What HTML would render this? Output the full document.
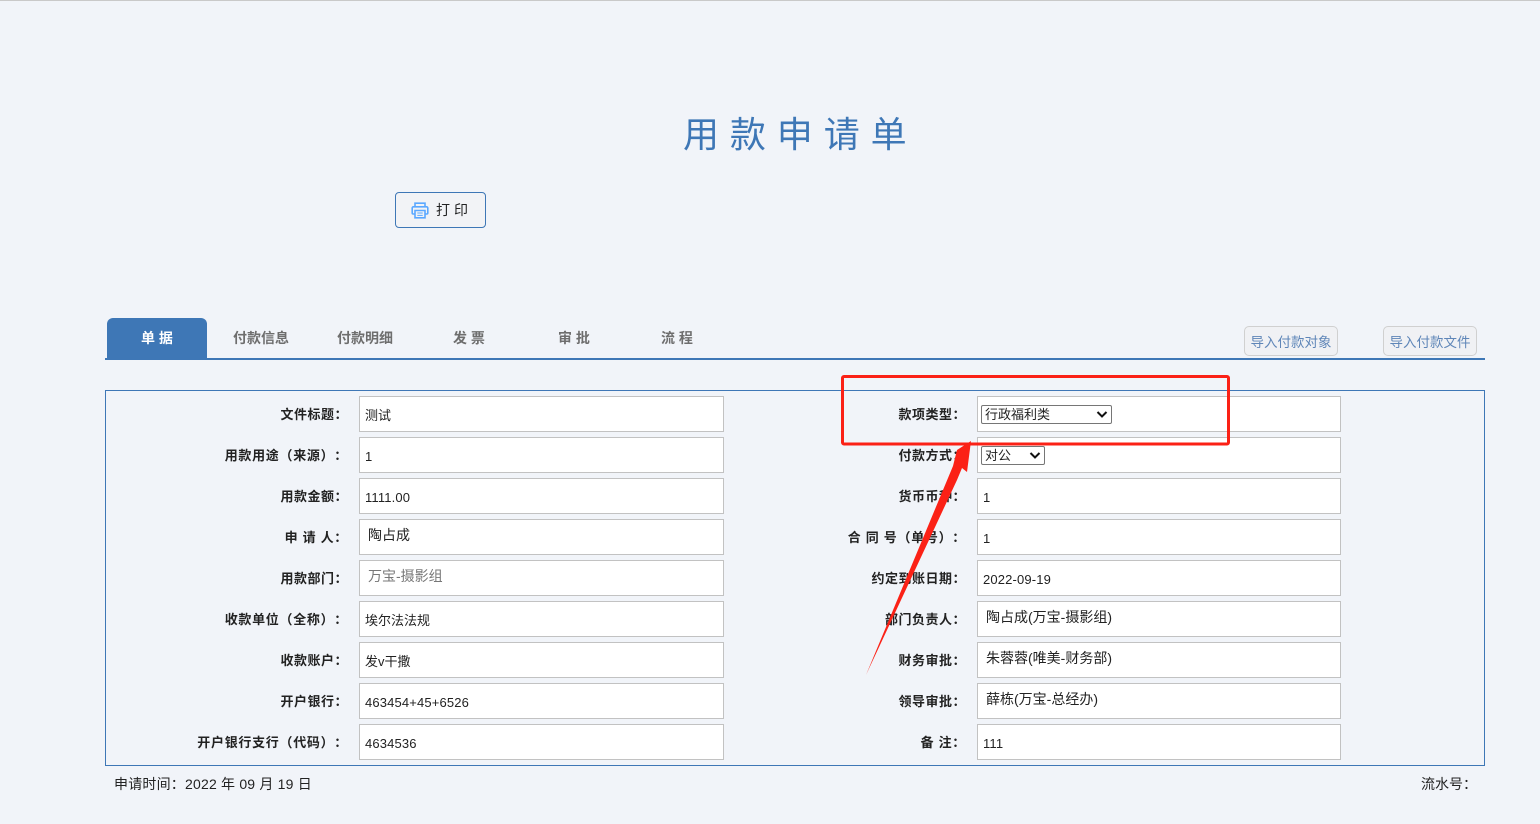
<!DOCTYPE html>
<html lang="zh">
<head>
<meta charset="utf-8">
<style>
html,body{margin:0;padding:0;}
body{width:1540px;height:824px;background:#f1f4f9;position:relative;overflow:hidden;font-family:"Liberation Sans","Noto Sans CJK SC",sans-serif;font-size:13px;color:#222;text-spacing-trim:space-all;}
.a{position:absolute;white-space:nowrap;}
.box{position:absolute;box-sizing:border-box;height:36px;background:#fff;border:1px solid #c2c2c2;line-height:37px;padding-left:5px;font-size:13px;color:#222;white-space:nowrap;}
.n{letter-spacing:.15px;}
.l{left:359px;width:365px;}
.r{left:977px;width:364px;}
.lab{position:absolute;height:36px;line-height:37px;font-weight:bold;text-align:right;font-size:13px;color:#222;white-space:nowrap;width:238px;letter-spacing:.5px;}
.ll{left:110px;}
.rl{left:728px;}
.p{letter-spacing:.7px;}
.tab{position:absolute;top:318px;height:40px;line-height:41px;text-align:center;font-weight:bold;font-size:14px;color:#6e6e6e;white-space:nowrap;}
.btn{position:absolute;box-sizing:border-box;top:326px;height:30px;background:#f0f1f4;border:1px solid #d0d0d0;border-radius:5px;color:#5f86b8;font-size:13.5px;line-height:31px;text-align:center;white-space:nowrap;}
.sel{position:absolute;box-sizing:border-box;height:19px;background:#fff;border:1px solid #767676;border-radius:2px;line-height:18px;padding-left:3px;font-size:13px;color:#222;white-space:nowrap;}
.ind{color:#222;padding-left:8px;line-height:30px;font-size:14px;}
</style>
</head>
<body>
<div class="a" style="left:0;top:0;width:1540px;height:1px;background:#c9c9c9;"></div>

<div class="a" style="left:683px;top:110px;font-size:36px;line-height:50px;color:#3e77b6;letter-spacing:10.9px;">用款申请单</div>

<div class="a" style="left:395px;top:192px;width:91px;height:36px;box-sizing:border-box;border:1px solid #3e77b6;border-radius:4px;background:#f2f3f6;"></div>
<svg class="a" style="left:411px;top:201px;" width="18" height="18" viewBox="0 0 18 18">
<g style="fill:none;stroke:#5ba8ff;stroke-width:1.6">
<path d="M4 6V2.200h10V6"/>
<path d="M4 13H2.200a1 1 0 0 1-1-1V7a1.200 1.200 0 0 1 1.200-1.200h13.200A1.200 1.200 0 0 1 16.800 7v5a1 1 0 0 1-1 1H14"/>
<path d="M4 9.500h10V16.800H4z"/>
<path d="M6.300 12h5.400M6.300 14.400h5.400" style="stroke-width:1"/>
</g>
</svg>
<div class="a" style="left:436px;top:201px;font-size:14px;line-height:18px;letter-spacing:4px;color:#222;">打印</div>

<div class="a" style="left:107px;top:318px;width:100px;height:40px;background:#3e77b6;border-radius:6px 6px 0 0;"></div>
<div class="tab" style="left:107px;width:100px;color:#fff;">单 据</div>
<div class="tab" style="left:211px;width:100px;">付款信息</div>
<div class="tab" style="left:315px;width:100px;">付款明细</div>
<div class="tab" style="left:419px;width:100px;">发 票</div>
<div class="tab" style="left:524px;width:100px;">审 批</div>
<div class="tab" style="left:627px;width:100px;">流 程</div>
<div class="a" style="left:105px;top:358px;width:1380px;height:2px;background:#3e77b6;"></div>

<div class="btn" style="left:1244px;width:94px;">导入付款对象</div>
<div class="btn" style="left:1383px;width:94px;">导入付款文件</div>

<div class="a" style="left:105px;top:390px;width:1380px;height:376px;box-sizing:border-box;border:1px solid #3e77b6;"></div>

<div class="lab ll" style="top:396px;">文件标题：</div>
<div class="box l" style="top:396px;">测试</div>
<div class="lab ll p" style="top:437px;">用款用途（来源）：</div>
<div class="box l n" style="top:437px;">1</div>
<div class="lab ll" style="top:478px;">用款金额：</div>
<div class="box l n" style="top:478px;">1111.00</div>
<div class="lab ll p" style="top:519px;">申 请 人：</div>
<div class="box l ind" style="top:519px;">陶占成</div>
<div class="lab ll" style="top:560px;">用款部门：</div>
<div class="box l ind" style="top:560px;color:#777;">万宝-摄影组</div>
<div class="lab ll p" style="top:601px;">收款单位（全称）：</div>
<div class="box l" style="top:601px;">埃尔法法规</div>
<div class="lab ll" style="top:642px;">收款账户：</div>
<div class="box l" style="top:642px;">发v干撒</div>
<div class="lab ll" style="top:683px;">开户银行：</div>
<div class="box l n" style="top:683px;">463454+45+6526</div>
<div class="lab ll p" style="top:724px;">开户银行支行（代码）：</div>
<div class="box l n" style="top:724px;">4634536</div>

<div class="lab rl" style="top:396px;">款项类型：</div>
<div class="box r" style="top:396px;"></div>
<div class="sel" style="left:981px;top:405px;width:131px;">行政福利类</div>
<svg class="a" style="left:1096px;top:410px;" width="12" height="9" viewBox="0 0 12 9" fill="none" stroke="#111" stroke-width="2"><path d="M1.500 2l4.500 4.500L10.500 2"/></svg>
<div class="lab rl" style="top:437px;">付款方式：</div>
<div class="box r" style="top:437px;"></div>
<div class="sel" style="left:981px;top:446px;width:64px;">对公</div>
<svg class="a" style="left:1029px;top:451px;" width="12" height="9" viewBox="0 0 12 9" fill="none" stroke="#111" stroke-width="2"><path d="M1.500 2l4.500 4.500L10.500 2"/></svg>
<div class="lab rl" style="top:478px;">货币币种：</div>
<div class="box r" style="top:478px;">1</div>
<div class="lab rl p" style="top:519px;">合 同 号（单号）：</div>
<div class="box r" style="top:519px;">1</div>
<div class="lab rl" style="top:560px;">约定到账日期：</div>
<div class="box r n" style="top:560px;">2022-09-19</div>
<div class="lab rl" style="top:601px;">部门负责人：</div>
<div class="box r ind" style="top:601px;">陶占成(万宝-摄影组)</div>
<div class="lab rl" style="top:642px;">财务审批：</div>
<div class="box r ind" style="top:642px;">朱蓉蓉(唯美-财务部)</div>
<div class="lab rl" style="top:683px;">领导审批：</div>
<div class="box r ind" style="top:683px;">薛栋(万宝-总经办)</div>
<div class="lab rl p" style="top:724px;">备 注：</div>
<div class="box r n" style="top:724px;">111</div>

<div class="a" style="left:114px;top:775px;font-size:14px;line-height:18px;color:#222;letter-spacing:.2px;">申请时间：2022 年 09 月 19 日</div>
<div class="a" style="left:1421px;top:775px;font-size:14px;line-height:18px;color:#222;">流水号：</div>

<svg class="a" style="left:0;top:0;pointer-events:none;" width="1540" height="824" viewBox="0 0 1540 824">
<rect x="842.500" y="376.500" width="386" height="67.500" rx="1.500" fill="none" stroke="#fb2116" stroke-width="3"/>
<path d="M971 441L967 472L962 468L957 480L866 675L953 466L957 450Z" fill="#fb2116"/>
</svg>
</body>
</html>
